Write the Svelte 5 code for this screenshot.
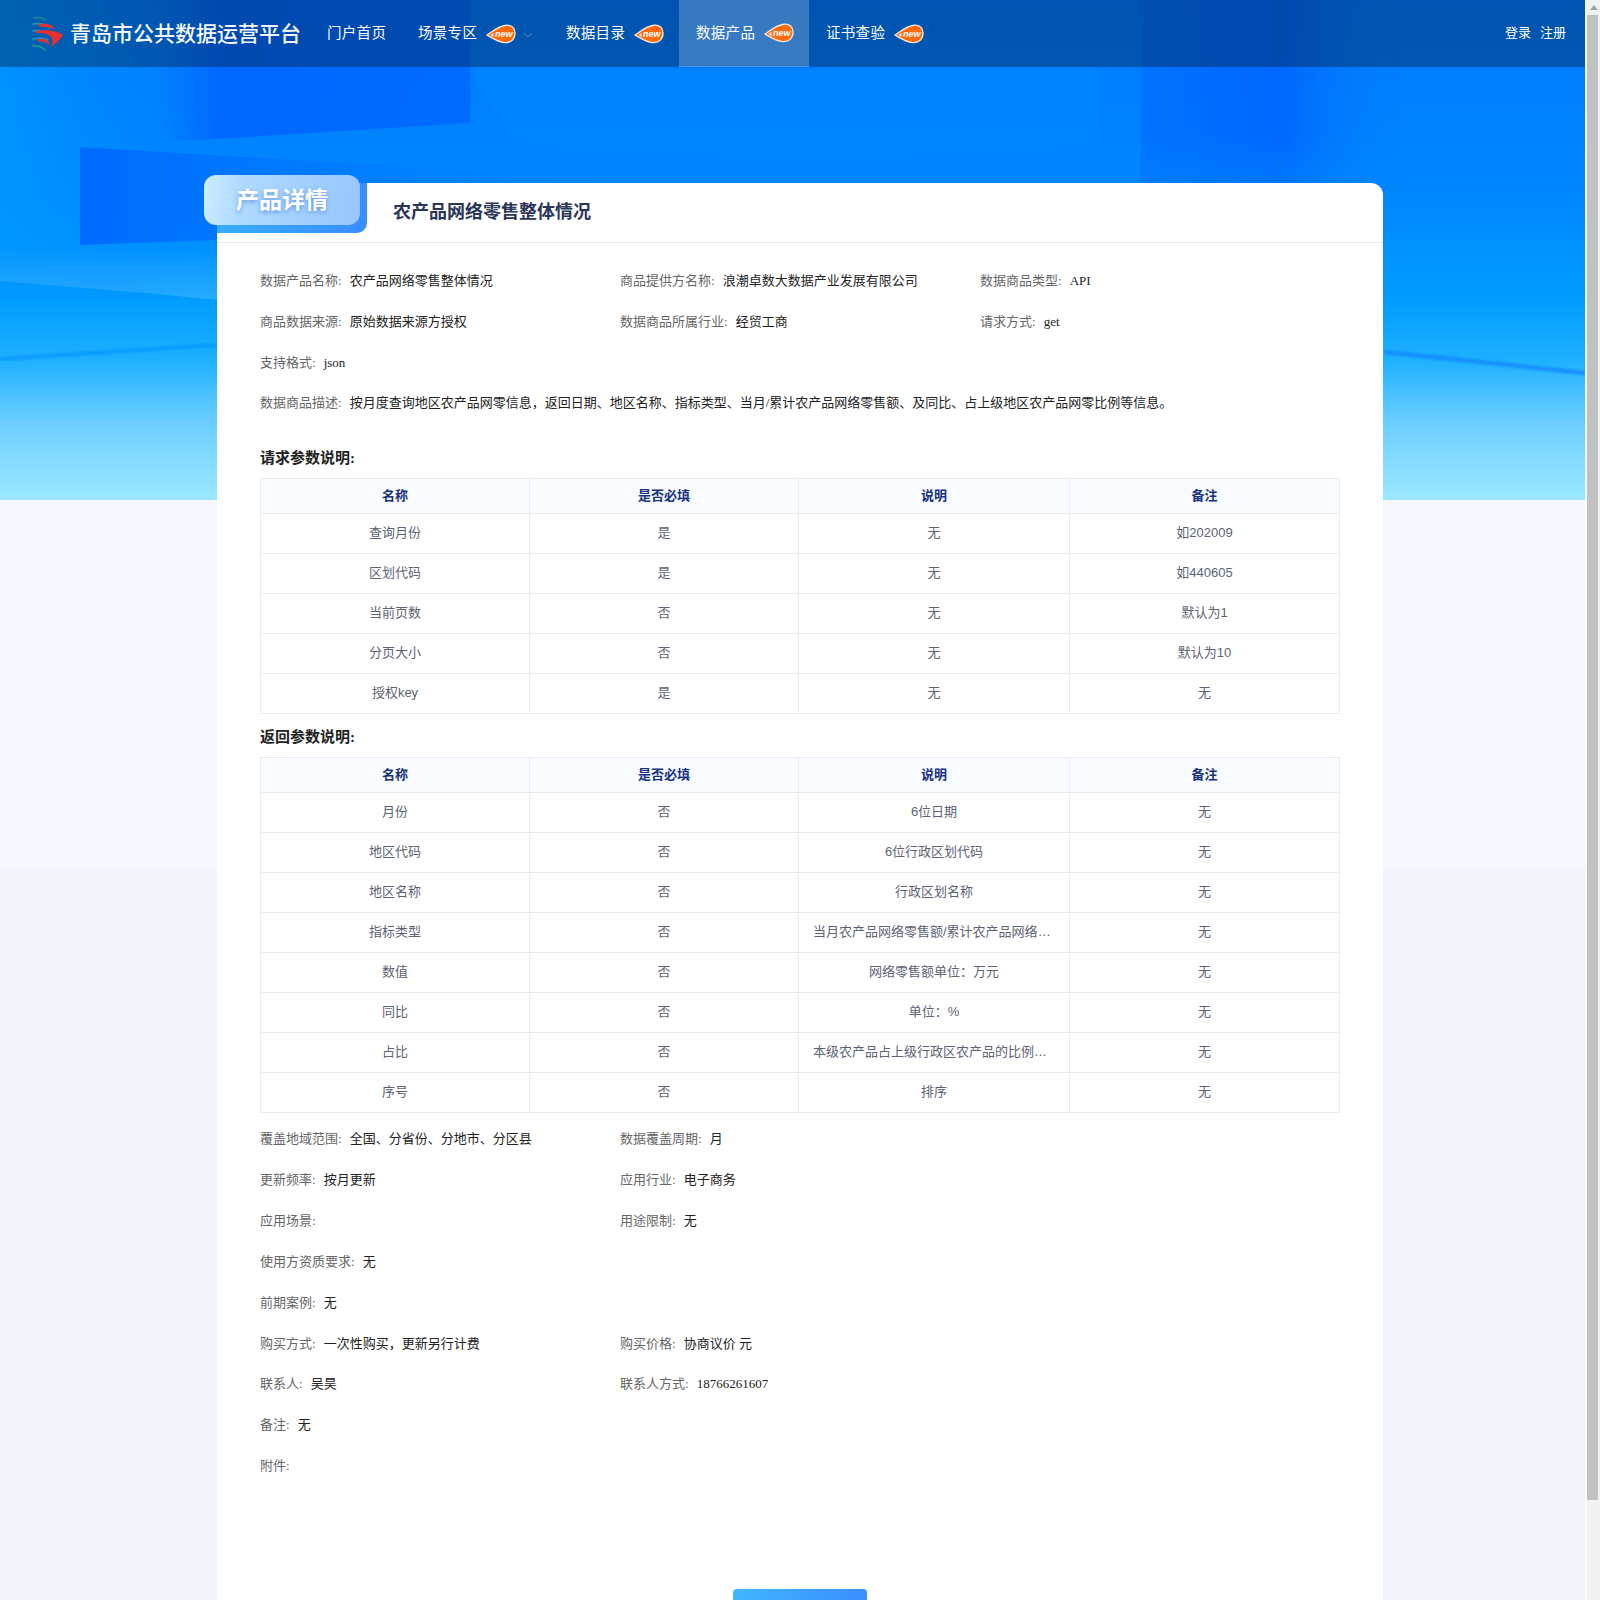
<script>
  const nav = [
    { t: '门户首页', cls: 'home' },
    { t: '场景专区', badge: true, chev: true },
    { t: '数据目录', badge: true },
    { t: '数据产品', badge: true, active: true },
    { t: '证书查验', badge: true }
  ];
  const top1 = [
    [['数据产品名称', '农产品网络零售整体情况'], ['商品提供方名称', '浪潮卓数大数据产业发展有限公司'], ['数据商品类型', 'API']],
    [['商品数据来源', '原始数据来源方授权'], ['数据商品所属行业', '经贸工商'], ['请求方式', 'get']],
    [['支持格式', 'json']],
    [['数据商品描述', '按月度查询地区农产品网零信息，返回日期、地区名称、指标类型、当月/累计农产品网络零售额、及同比、占上级地区农产品网零比例等信息。']]
  ];
  const heads = ['名称', '是否必填', '说明', '备注'];
  const req = [
    ['查询月份', '是', '无', '如202009'],
    ['区划代码', '是', '无', '如440605'],
    ['当前页数', '否', '无', '默认为1'],
    ['分页大小', '否', '无', '默认为10'],
    ['授权key', '是', '无', '无']
  ];
  const res = [
    ['月份', '否', '6位日期', '无'],
    ['地区代码', '否', '6位行政区划代码', '无'],
    ['地区名称', '否', '行政区划名称', '无'],
    ['指标类型', '否', '当月农产品网络零售额/累计农产品网络零售额', '无'],
    ['数值', '否', '网络零售额单位：万元', '无'],
    ['同比', '否', '单位：%', '无'],
    ['占比', '否', '本级农产品占上级行政区农产品的比例（%）', '无'],
    ['序号', '否', '排序', '无']
  ];
  const bottom = [
    [['覆盖地域范围', '全国、分省份、分地市、分区县'], ['数据覆盖周期', '月']],
    [['更新频率', '按月更新'], ['应用行业', '电子商务']],
    [['应用场景', ''], ['用途限制', '无']],
    [['使用方资质要求', '无']],
    [['前期案例', '无']],
    [['购买方式', '一次性购买，更新另行计费'], ['购买价格', '协商议价 元']],
    [['联系人', '吴昊'], ['联系人方式', '18766261607']],
    [['备注', '无']],
    [['附件', '']]
  ];
</script>

{#snippet badge()}
  <span class="badge">
    <svg width="30" height="20" viewBox="0 0 30 20" aria-hidden="true">
      <path d="M1 11 C6 8 12 2 20 1.2 C26 .8 29.2 4.5 29 9.5 C28.8 15.5 24.5 19 18.5 18.6 C12 18.2 6 14 1 11 Z" fill="#ff6a0a" stroke="#f6e6d8" stroke-width="1.4" />
      <path d="M4.5 11 L7.5 9 L7.5 13 Z" fill="#fff" />
    </svg>
    <span class="new">new</span>
  </span>
{/snippet}

{#snippet rows(list)}
  {#each list as row}
    <div class="info">
      {#each row as [k, v]}
        <div class="cell"><span class="k">{k}:</span><span class="v">{v}</span></div>
      {/each}
    </div>
  {/each}
{/snippet}

{#snippet table(data)}
  <table>
    <colgroup><col class="c1" /><col class="c2" /><col class="c3" /><col class="c4" /></colgroup>
    <thead><tr>{#each heads as h}<th>{h}</th>{/each}</tr></thead>
    <tbody>
      {#each data as r}
        <tr>{#each r as c}<td>{c}</td>{/each}</tr>
      {/each}
    </tbody>
  </table>
{/snippet}

<div class="shell">
  <div class="page">
    <div class="hero" aria-hidden="true">
      <svg width="1585" height="500" viewBox="0 0 1585 500">
        <defs>
          <linearGradient id="base" x1="0" y1="0" x2="0" y2="1">
            <stop offset="0" stop-color="#0078ff" />
            <stop offset=".4" stop-color="#0088ff" />
            <stop offset=".6" stop-color="#009cff" />
            <stop offset=".72" stop-color="#1eb0ff" />
            <stop offset=".85" stop-color="#6ed0ff" />
            <stop offset="1" stop-color="#9ce7ff" />
          </linearGradient>
          <linearGradient id="edgeL" x1="0" x2="1" y1="0" y2="0">
            <stop offset="0" stop-color="#0098ff" stop-opacity=".75" />
            <stop offset=".12" stop-color="#0090ff" stop-opacity="0" />
          </linearGradient>
          <linearGradient id="s1" x1="0" x2="1" y1="0" y2="0">
            <stop offset="0" stop-color="#0068ff" stop-opacity="0" />
            <stop offset=".2" stop-color="#0064ff" stop-opacity=".9" />
            <stop offset="1" stop-color="#0068ff" stop-opacity=".85" />
          </linearGradient>
          <linearGradient id="s2" x1="0" x2="1" y1="0" y2="0">
            <stop offset="0" stop-color="#0068ff" stop-opacity=".95" />
            <stop offset=".4" stop-color="#0078ff" stop-opacity=".7" />
            <stop offset="1" stop-color="#0088ff" stop-opacity="0" />
          </linearGradient>
          <linearGradient id="s3" x1="0" x2="1" y1="0" y2="0">
            <stop offset="0" stop-color="#0070ff" stop-opacity=".85" />
            <stop offset=".55" stop-color="#0064ff" stop-opacity=".9" />
            <stop offset="1" stop-color="#0080ff" stop-opacity="0" />
          </linearGradient>
          <linearGradient id="fadeV" x1="0" x2="0" y1="0" y2="1">
            <stop offset="0" stop-color="#fff" />
            <stop offset=".55" stop-color="#fff" />
            <stop offset="1" stop-color="#fff" stop-opacity="0" />
          </linearGradient>
          <mask id="m3" maskUnits="userSpaceOnUse" x="1130" y="0" width="300" height="240">
            <rect x="1130" y="0" width="300" height="240" fill="url(#fadeV)" />
          </mask>
          <linearGradient id="band" gradientUnits="userSpaceOnUse" x1="0" x2="0" y1="245" y2="295">
            <stop offset="0" stop-color="#fff" stop-opacity="0" />
            <stop offset="1" stop-color="#fff" stop-opacity=".14" />
          </linearGradient>
          <filter id="soft1"><feGaussianBlur stdDeviation="1.5" /></filter>
        </defs>
        <rect width="1585" height="500" fill="url(#base)" />
        <rect width="1585" height="300" fill="url(#edgeL)" />
        <path d="M160 0 H470 V123 L200 140 L160 140 Z" fill="url(#s1)" />
        <path d="M80 147 L560 176 L700 170 L217 240 L80 245 Z" fill="url(#s2)" />
        <path d="M470 70 H1100 V150 L820 165 L520 150 Z" fill="#008aff" opacity=".5" />
        <path d="M1143 0 H1400 V183 H1140 Z" fill="url(#s3)" mask="url(#m3)" />
        <path d="M0 245 L217 255 V300 L157 294 L0 281 Z" fill="url(#band)" />
        <path d="M0 359 L217 345" stroke="#0094ff" stroke-width="3" fill="none" filter="url(#soft1)" />
        <path d="M1384 352 L1585 373" stroke="#0a80ff" stroke-width="3" fill="none" filter="url(#soft1)" />
      </svg>
    </div>
    <div class="lower" aria-hidden="true"></div>

    <header>
      <div class="logo">
        <svg width="34" height="36" viewBox="0 0 34 36">
          <g fill="none" stroke-linecap="round">
            <path d="M4 2 C9 1 13 2 15 4" stroke="#1f8f92" stroke-width="1.6" />
            <path d="M3 8 C9 7 15 8 20 11" stroke="#3aa0a8" stroke-width="1.6" opacity=".8" />
            <path d="M3 15 C10 14 15 15 19 18" stroke="#3aa0a8" stroke-width="1.6" opacity=".8" />
            <path d="M3 23 C9 22 14 22 18 24" stroke="#3aa0a8" stroke-width="1.6" opacity=".8" />
            <path d="M3 30 C8 29 12 31 15 34" stroke="#1f9f8f" stroke-width="1.6" />
          </g>
          <path d="M9 8 C18 7 24 9 24.5 14 C22 11 16 10.5 9 11 Z" fill="#e62f2f" />
          <path d="M6 15 C16 13 28 15 33 19 C30 24 26 27 21 31 C23 26 23 23 20 20 C17 17.5 12 16.5 6 17 Z" fill="#e62f2f" />
          <path d="M8 23 C15 22.5 19 24 20 29 C17 26.5 13 25.5 8 25.5 Z" fill="#e62f2f" />
        </svg>
      </div>
      <div class="brand">青岛市公共数据运营平台</div>
      <nav>
        {#each nav as n}
          <div class="item" class:active={n.active} class:home={n.cls === 'home'} class:chev={n.chev}>
            <span>{n.t}</span>
            {#if n.badge}{@render badge()}{/if}
            {#if n.chev}
              <svg class="cv" width="10" height="6" viewBox="0 0 10 6"><path d="M1 1 L5 5 L9 1" fill="none" stroke="#5f8fc8" stroke-width="1" /></svg>
            {/if}
          </div>
        {/each}
      </nav>
      <div class="auth"><span>登录</span><span>注册</span></div>
    </header>

    <main class="card">
      <div class="tab-under"></div>
      <div class="tab">产品详情</div>
      <div class="card-head"><h1>农产品网络零售整体情况</h1></div>
      <div class="card-body">
        {@render rows(top1)}
        <h2 class="t1">请求参数说明:</h2>
        {@render table(req)}
        <h2 class="t2">返回参数说明:</h2>
        {@render table(res)}
        <div class="after">{@render rows(bottom)}</div>
        <div class="actions"><div class="btn"></div></div>
      </div>
    </main>
  </div>
  <aside class="scroll" aria-hidden="true">
    <div class="arrow"></div>
    <div class="thumb"></div>
  </aside>
</div>

<style>
  :global(html), :global(body) { margin: 0; overflow: hidden; }
  .shell {
    display: flex;
    width: 1600px;
    height: 1600px;
    overflow: hidden;
    font-family: "Liberation Serif", "Noto Sans CJK SC", serif;
  }
  .page {
    position: relative;
    width: 1585px;
    flex: none;
    height: 1600px;
    overflow: hidden;
    background: #f1f5fa;
  }
  .hero { position: absolute; left: 0; top: 0; width: 1585px; height: 500px; }
  .hero svg { display: block; }
  .lower { position: absolute; left: 0; top: 500px; width: 1585px; height: 367px; background: #f5f8ff; }

  header {
    position: relative;
    height: 67px;
    display: flex;
    align-items: center;
    background: rgba(0, 30, 60, .4);
    color: #fff;
    padding-left: 30px;
  }
  .logo { width: 34px; height: 36px; margin-right: 6px; }
  .logo svg { display: block; }
  .brand {
    font-family: "Noto Sans CJK SC", sans-serif;
    font-size: 21px;
    font-weight: 500;
    line-height: 26px;
    width: 240px;
    padding-bottom: 4px;
    white-space: nowrap;
    color: #f6f9ff;
  }
  nav { display: flex; height: 67px; }
  .item {
    display: flex;
    align-items: center;
    height: 67px;
    box-sizing: border-box;
    width: 130px;
    padding-left: 17px;
    font-size: 14.5px;
    font-family: "Noto Sans CJK SC", sans-serif;
    font-weight: 400;
    white-space: nowrap;
  }
  .item > span:first-child { width: 59px; letter-spacing: .3px; padding-bottom: 4px; }
  .item.home { width: 91px; }
  .item.chev { width: 148px; }
  .item.active { background: rgba(255, 255, 255, .22); border-bottom: 1px solid #4a96ea; }
  .cv { margin-left: 7px; margin-top: 2px; }
  .badge { position: relative; display: block; width: 30px; height: 20px; margin-left: 9px; }
  .badge svg { display: block; }
  .new {
    position: absolute;
    left: 9px;
    top: 3px;
    font: italic bold 9px/15px "Liberation Sans", sans-serif;
    color: #fff;
  }
  .auth {
    margin-left: auto;
    display: flex;
    gap: 9px;
    padding: 0 19px 4px 0;
    font-family: "Noto Sans CJK SC", sans-serif;
    font-size: 13px;
    font-weight: 400;
  }

  .card {
    position: relative;
    width: 1166px;
    margin: 116px 0 0 217px;
    background: #fff;
    border-radius: 12px 12px 0 0;
  }
  .tab-under {
    position: absolute;
    left: 0;
    top: 0;
    width: 150px;
    height: 50px;
    background: linear-gradient(90deg, #37aeff, #3a8dff);
    border-radius: 0 0 10px 0;
  }
  .tab {
    position: absolute;
    left: -13px;
    top: -8px;
    width: 156px;
    height: 50px;
    box-sizing: border-box;
    padding: 0 0 5px 32px;
    display: flex;
    align-items: center;
    border-radius: 12px;
    background: linear-gradient(95deg, #cbecff 0%, #aed9ff 25%, #97c6ff 100%);
    color: #fff;
    font-family: "Noto Sans CJK SC", sans-serif;
    font-weight: 700;
    font-size: 23px;
    text-shadow: 0 2px 4px rgba(50, 110, 200, .55);
  }
  .card-head {
    height: 60px;
    box-sizing: border-box;
    border-bottom: 1px solid #e8e8e8;
    padding: 0 0 5px 176px;
    display: flex;
    align-items: center;
  }
  h1 {
    margin: 0;
    font-size: 18px;
    font-weight: 700;
    color: #2b3558;
  }
  .card-body { padding: 16px 44px 0 43px; }
  .info { display: grid; grid-template-columns: 360px 360px 1fr; height: 40.85px; align-items: center; font-size: 13px; white-space: nowrap; }
  .k { color: #666; margin-right: 8px; }
  .v { color: #222; }
  h2 { margin: 0 0 10px; font-size: 15px; line-height: 20px; font-weight: 700; color: #222; }
  h2.t1 { margin-top: 26px; }
  h2.t2 { margin-top: 13px; }
  table {
    width: 1079px;
    table-layout: fixed;
    border-collapse: collapse;
    border: 1px solid #dcdfe6;
    font-family: "Liberation Sans", "Noto Sans CJK SC", sans-serif;
    font-size: 13px;
  }
  .c1, .c2 { width: 269px; }
  .c3 { width: 271px; }
  .c4 { width: 270px; }
  th, td {
    border: 1px solid #e8ebf0;
    text-align: center;
    padding: 0 14px 4px;
    overflow: hidden;
    white-space: nowrap;
    text-overflow: ellipsis;
  }
  th {
    height: 31px;
    padding-bottom: 3px;
    background: #f8fbff;
    color: #17317f;
    font-family: "Liberation Serif", "Noto Sans CJK SC", serif;
    font-weight: 700;
  }
  td { height: 35px; color: #5c6373; }
  .after { margin-top: 4px; }
  .actions { display: flex; justify-content: center; margin-top: 104px; }
  .btn { width: 134px; height: 40px; border-radius: 4px; background: linear-gradient(100deg, #40b6ff, #3a8cff); }

  .scroll { width: 15px; flex: none; background: #f1f1f1; border-left: 2px solid #fafafa; box-sizing: border-box; }
  .arrow {
    width: 0;
    height: 0;
    margin: 5px auto 5px;
    border-left: 4px solid transparent;
    border-right: 4px solid transparent;
    border-bottom: 5px solid #a3a3a3;
  }
  .thumb { width: 11px; height: 1485px; background: #c1c1c1; }
</style>
